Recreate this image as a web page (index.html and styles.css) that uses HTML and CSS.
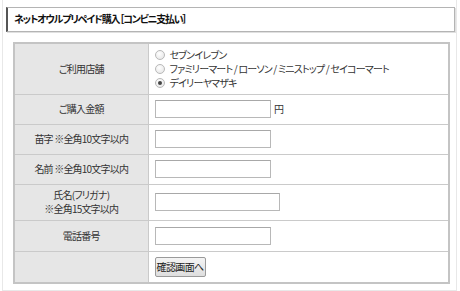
FILE: index.html
```html
<!DOCTYPE html>
<html lang="ja">
<head>
    <meta charset="UTF-8">
    <title>ネットオウルプリペイド購入</title>
    <link rel="stylesheet" href="styles.css">
</head>
<body>
    <div class="page">
        <h2 class="title">ネットオウルプリペイド購入［コンビニ支払い］</h2>
        <form class="order">
            <table class="form-table">
                <tr class="row-store">
                    <th>ご利用店舗</th>
                    <td>
                        <label class="radio"><input type="radio" name="store" value="seven"> セブンイレブン</label>
                        <label class="radio"><input type="radio" name="store" value="family"> ファミリーマート / ローソン / ミニストップ / セイコーマート</label>
                        <label class="radio"><input type="radio" name="store" value="daily" checked> デイリーヤマザキ</label>
                    </td>
                </tr>
                <tr class="row-amount">
                    <th>ご購入金額</th>
                    <td><input type="text" class="text"> <span class="unit">円</span></td>
                </tr>
                <tr class="row-name">
                    <th>苗字 ※全角10文字以内</th>
                    <td><input type="text" class="text"></td>
                </tr>
                <tr class="row-name">
                    <th>名前 ※全角10文字以内</th>
                    <td><input type="text" class="text"></td>
                </tr>
                <tr class="row-kana">
                    <th>氏名(フリガナ)<br>※全角15文字以内</th>
                    <td><input type="text" class="text wide"></td>
                </tr>
                <tr class="row-phone">
                    <th>電話番号</th>
                    <td><input type="text" class="text"></td>
                </tr>
                <tr class="row-submit">
                    <th></th>
                    <td><button type="submit" class="btn">確認画面へ</button></td>
                </tr>
            </table>
        </form>
    </div>
</body>
</html>
```
FILE: styles.css
```css
* {
    margin: 0;
    padding: 0;
    box-sizing: border-box;
}
body {
    background: #fff;
    color: #333;
    font-family: "Noto Sans CJK JP", "Noto Sans", sans-serif;
    font-size: 10px;
    line-height: 14px;
    letter-spacing: -0.8px;
    font-feature-settings: "palt";
}
.page {
    width: 455px;
    height: 291px;
    margin-left: 2px;
    border: 1px solid #e8e8e8;
    border-top: none;
    padding: 7px 1px 0 3px;
}
.title {
    height: 25px;
    border: 1px solid #b4b4b4;
    border-left: 2px solid #555;
    box-shadow: 1px 1px 0 #e0e0e0;
    padding-left: 6px;
    font-size: 10px;
    line-height: 22px;
    letter-spacing: -1.2px;
    font-weight: bold;
    color: #111;
    margin-bottom: 10px;
}
.form-table {
    width: 437px;
    margin-left: 7px;
    border-collapse: collapse;
    border: 2px solid #c4c4c4;
}
.form-table th,
.form-table td {
    border: 1px solid #cacaca;
    white-space: nowrap;
}
.form-table th {
    width: 134px;
    background: #e6e6e6;
    font-weight: normal;
    text-align: center;
    vertical-align: middle;
}
.form-table td {
    padding: 0 6px;
    vertical-align: middle;
}
.row-store { height: 51px; }
.row-amount { height: 30px; }
.row-name { height: 30px; }
.row-kana { height: 36px; }
.row-phone { height: 31px; }
.row-submit { height: 32px; }
.radio {
    display: flex;
    align-items: center;
    gap: 5px;
    height: 14px;
}
.radio input {
    appearance: none;
    flex: none;
    width: 10px;
    height: 10px;
    border: 1px solid #b9b9b9;
    border-radius: 50%;
    background: radial-gradient(circle at 40% 35%, #fff, #e2e2e2);
    position: relative;
}
.radio input:checked::after {
    content: "";
    position: absolute;
    left: 2px;
    top: 2px;
    width: 4px;
    height: 4px;
    border-radius: 50%;
    background: #444;
}
.text {
    width: 116px;
    height: 18px;
    border: 1px solid #b8b8b8;
    border-top-color: #a8a8a8;
    background: #fff;
    vertical-align: middle;
}
.text.wide {
    width: 125px;
}
.unit {
    margin-left: 2px;
    vertical-align: middle;
}
.btn {
    width: 51px;
    height: 20px;
    padding: 0;
    border: 1px solid #9a9a9a;
    border-radius: 2px;
    background: linear-gradient(#f4f4f4, #dedede);
    font-family: inherit;
    font-size: 10px;
    letter-spacing: -0.6px;
    white-space: nowrap;
    color: #222;
    vertical-align: middle;
}
```
